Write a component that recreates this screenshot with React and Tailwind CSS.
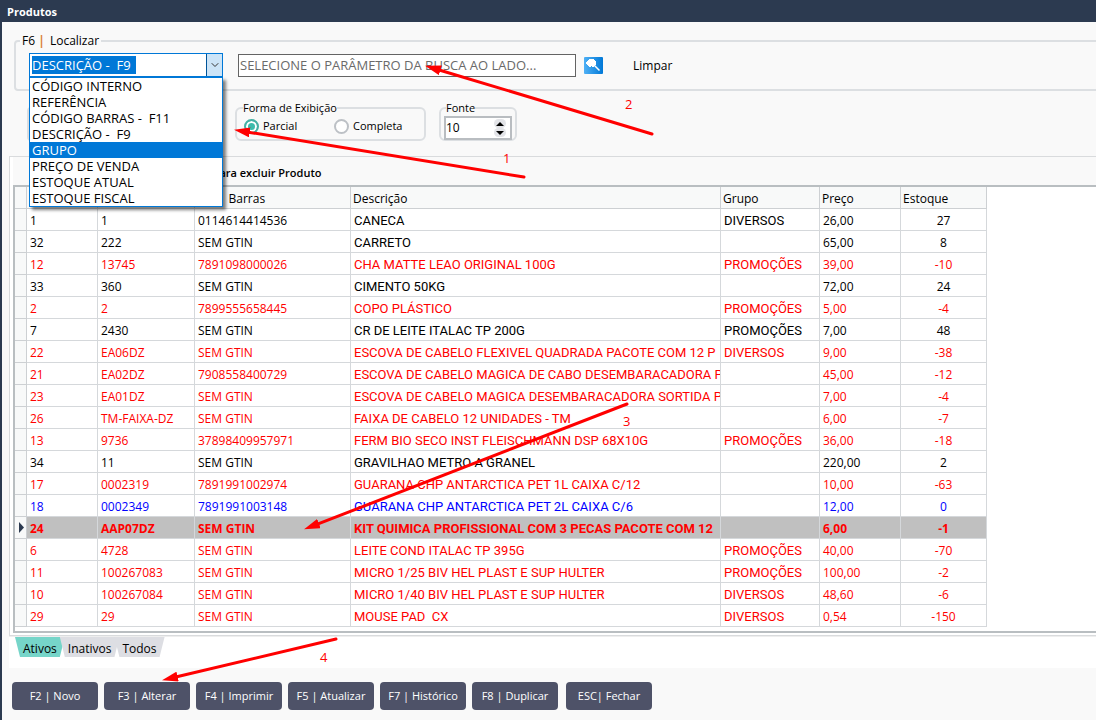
import { useState } from 'react';
import { ChevronDown } from 'lucide-react';

const searchFields = [
  'CÓDIGO INTERNO',
  'REFERÊNCIA',
  'CÓDIGO BARRAS -\u00a0 F11',
  'DESCRIÇÃO -\u00a0 F9',
  'GRUPO',
  'PREÇO DE VENDA',
  'ESTOQUE ATUAL',
  'ESTOQUE FISCAL',
];

// codigo, referencia, barras, descricao, grupo, preco, estoque
const products = [
  ['1', '1', '0114614414536', 'CANECA', 'DIVERSOS', '26,00', '27'],
  ['32', '222', 'SEM GTIN', 'CARRETO', '', '65,00', '8'],
  ['12', '13745', '7891098000026', 'CHA MATTE LEAO ORIGINAL 100G', 'PROMOÇÕES', '39,00', '-10'],
  ['33', '360', 'SEM GTIN', 'CIMENTO 50KG', '', '72,00', '24'],
  ['2', '2', '7899555658445', 'COPO PLÁSTICO', 'PROMOÇÕES', '5,00', '-4'],
  ['7', '2430', 'SEM GTIN', 'CR DE LEITE ITALAC TP 200G', 'PROMOÇÕES', '7,00', '48'],
  ['22', 'EA06DZ', 'SEM GTIN', 'ESCOVA DE CABELO FLEXIVEL QUADRADA PACOTE COM 12 P', 'DIVERSOS', '9,00', '-38'],
  ['21', 'EA02DZ', '7908558400729', 'ESCOVA DE CABELO MAGICA DE CABO DESEMBARACADORA P', '', '45,00', '-12'],
  ['23', 'EA01DZ', 'SEM GTIN', 'ESCOVA DE CABELO MAGICA DESEMBARACADORA SORTIDA PA', '', '7,00', '-4'],
  ['26', 'TM-FAIXA-DZ', 'SEM GTIN', 'FAIXA DE CABELO 12 UNIDADES - TM', '', '6,00', '-7'],
  ['13', '9736', '37898409957971', 'FERM BIO SECO INST FLEISCHMANN DSP 68X10G', 'PROMOÇÕES', '36,00', '-18'],
  ['34', '11', 'SEM GTIN', 'GRAVILHAO METRO A GRANEL', '', '220,00', '2'],
  ['17', '0002319', '7891991002974', 'GUARANA CHP ANTARCTICA PET 1L CAIXA C/12', '', '10,00', '-63'],
  ['18', '0002349', '7891991003148', 'GUARANA CHP ANTARCTICA PET 2L CAIXA C/6', '', '12,00', '0'],
  ['24', 'AAP07DZ', 'SEM GTIN', 'KIT QUIMICA PROFISSIONAL COM 3 PECAS PACOTE COM 12', '', '6,00', '-1'],
  ['6', '4728', 'SEM GTIN', 'LEITE COND ITALAC TP 395G', 'PROMOÇÕES', '40,00', '-70'],
  ['11', '100267083', 'SEM GTIN', 'MICRO 1/25 BIV HEL PLAST E SUP HULTER', 'PROMOÇÕES', '100,00', '-2'],
  ['10', '100267084', 'SEM GTIN', 'MICRO 1/40 BIV HEL PLAST E SUP HULTER', 'DIVERSOS', '48,60', '-6'],
  ['29', '29', 'SEM GTIN', 'MOUSE PAD\u00a0 CX', 'DIVERSOS', '0,54', '-150'],
];

const columns = ['', '', 'Cód.\u00a0 Barras', 'Descrição', 'Grupo', 'Preço', 'Estoque'];

const actions = [
  'F2 | Novo',
  'F3 | Alterar',
  'F4 | Imprimir',
  'F5 | Atualizar',
  'F7 | Histórico',
  'F8 | Duplicar',
  'ESC| Fechar',
];

const arrows = [
  { label: '1', from: [524, 177], to: [235, 130], text: [503, 163] },
  { label: '2', from: [652, 134], to: [426, 66], text: [625, 109] },
  { label: '3', from: [627, 404], to: [305, 529], text: [623, 426] },
  { label: '4', from: [336, 639], to: [163, 680], text: [320, 662] },
];

// negative stock is red, zero is blue
function stockColor(stock) {
  const n = Number(stock);
  if (n < 0) return 'text-[#ff0000]';
  if (n === 0) return 'text-[#0000ff]';
  return 'text-black';
}

function FieldSelect() {
  const [field, setField] = useState(searchFields[3]);
  const [open, setOpen] = useState(true);
  const [active, setActive] = useState(4);

  return (
    <div className="relative w-[194px]">
      <div className="flex h-6 border border-[#0078d7] bg-white">
        <div className="flex flex-1 items-center pl-0.5">
          <select
            aria-label="Localizar por"
            value={field}
            onChange={(e) => setField(e.target.value)}
            className="h-[18px] w-[104px] appearance-none bg-[#0078d7] text-[13px] leading-[18px] text-white outline-none"
          >
            {searchFields.map((f) => (
              <option key={f}>{f}</option>
            ))}
          </select>
        </div>
        <button
          aria-label="Abrir lista"
          onClick={() => setOpen(!open)}
          className="flex w-4 items-center justify-center border-l border-[#005499] bg-[#cce4f7]"
        >
          <ChevronDown className="h-3 w-3 text-[#333]" strokeWidth={2} />
        </button>
      </div>
      {open && (
        <ul
          role="listbox"
          aria-label="Campos de busca"
          className="absolute top-full left-0 z-10 w-full border border-[#0078d7] bg-white shadow-[3px_3px_3px_rgba(0,0,0,0.5)]"
        >
          {searchFields.map((f, i) => (
            <li
              key={f}
              role="option"
              aria-selected={i === active}
              onMouseEnter={() => setActive(i)}
              onClick={() => {
                setField(f);
                setOpen(false);
              }}
              className={`h-4 pl-0.5 text-[13px] leading-4 whitespace-nowrap ${
                i === active ? 'bg-[#0078d7] text-white' : 'text-black'
              }`}
            >
              {f}
            </li>
          ))}
        </ul>
      )}
    </div>
  );
}

function ViewOption({ label, checked, onChange }) {
  return (
    <label className="flex w-[90px] items-center gap-1">
      <input
        type="radio"
        name="exibicao"
        checked={checked}
        onChange={onChange}
        className="h-[15px] w-[15px] appearance-none rounded-full border-2 border-[#bdc1c6] bg-white checked:border-[#45b0a4] checked:bg-[#3dbbac] checked:shadow-[inset_0_0_0_2px_white]"
      />
      {label}
    </label>
  );
}

function SearchIcon() {
  return (
    <svg width="19" height="17" viewBox="0 0 19 17" aria-hidden="true">
      <defs>
        <linearGradient id="search-bg">
          <stop offset="0" stopColor="#4fb0f5" />
          <stop offset="1" stopColor="#0078d7" />
        </linearGradient>
      </defs>
      <rect width="19" height="17" rx="1" fill="url(#search-bg)" />
      <path d="M4 3h1V2h5v1h1v1h1v4h-1v1h-1v1H8V9H7v1H5V9H4V8H3V7H2V5h1V4h1z" fill="#fff" />
      <path d="M10.500 8.500l5 5" stroke="#fff" strokeWidth="1.500" />
    </svg>
  );
}

function ProductTable() {
  const [selected, setSelected] = useState('24');

  return (
    <table className="w-[972px] table-fixed border-separate border-spacing-0 text-left">
      <colgroup>
        <col className="w-3" />
        <col className="w-[71px]" />
        <col className="w-[97px]" />
        <col className="w-[156px]" />
        <col className="w-[370px]" />
        <col className="w-[99px]" />
        <col className="w-[81px]" />
        <col className="w-[86px]" />
      </colgroup>
      <thead>
        <tr className="h-[22px] bg-[#f8f9f9]">
          <th className="border-r border-b border-[#cdd0d3] p-0" />
          {columns.map((c, i) => (
            <th key={i} className="border-r border-b border-[#cdd0d3] p-0 pt-[3px] pl-0.5 font-normal whitespace-nowrap">
              {c}
            </th>
          ))}
        </tr>
      </thead>
      <tbody>
        {products.map((row) => {
          const isSelected = row[0] === selected;
          return (
            <tr
              key={row[0]}
              onClick={() => setSelected(row[0])}
              className={`h-[22px] ${stockColor(row[6])} ${isSelected ? 'bg-[#c0c0c0] font-bold' : ''}`}
            >
              <td className="border-r border-b border-[#cdd0d3] bg-[#f8f9f9] p-0">
                {isSelected && (
                  <svg width="6" height="11" viewBox="0 0 6 11" className="ml-1" aria-hidden="true">
                    <path d="M0 0l5 5.500l-5 5.500z" fill="#2c3a50" />
                  </svg>
                )}
              </td>
              {row.map((cell, i) => (
                <td
                  key={i}
                  className={`overflow-hidden border-r border-b border-[#d5d8db] p-0 pt-[3px] whitespace-nowrap ${
                    i === 6 ? 'text-center' : 'pl-[3px]'
                  } ${i === 3 || i === 4 ? "font-['Roboto',sans-serif] text-[13px]" : ''}`}
                >
                  {cell}
                </td>
              ))}
            </tr>
          );
        })}
      </tbody>
    </table>
  );
}

function Annotations() {
  return (
    <svg className="pointer-events-none absolute top-0 -left-0.5 z-20" width="700" height="720" aria-hidden="true">
      <defs>
        <marker id="head" markerUnits="userSpaceOnUse" markerWidth="16" markerHeight="10" refX="15" refY="5" orient="auto">
          <path d="M0 0L16 5L0 10z" fill="#ff0000" />
        </marker>
      </defs>
      {arrows.map(({ label, from, to, text }) => {
        // stop the shaft inside the head so the tip stays sharp
        const len = Math.hypot(to[0] - from[0], to[1] - from[1]);
        const ux = (to[0] - from[0]) / len;
        const uy = (to[1] - from[1]) / len;
        return (
          <g key={label}>
            <line x1={from[0]} y1={from[1]} x2={to[0] - ux * 12} y2={to[1] - uy * 12} stroke="#ff0000" strokeWidth="3" strokeLinecap="round" />
            <line x1={to[0] - ux * 12} y1={to[1] - uy * 12} x2={to[0]} y2={to[1]} stroke="none" markerEnd="url(#head)" />
            <text x={text[0]} y={text[1]} fill="#ff0000" fontSize="13">
              {label}
            </text>
          </g>
        );
      })}
    </svg>
  );
}

export default function App() {
  const [view, setView] = useState('Parcial');
  const [fontSize, setFontSize] = useState(10);
  const [tab, setTab] = useState('Ativos');

  return (
    <div className="relative min-h-screen overflow-hidden border-l-2 border-[#2c3a50] bg-[#f9f9f9] font-['Open_Sans','Noto_Sans',sans-serif] text-[12px] leading-4 text-black">
      <header className="flex h-[22px] items-center bg-[#2c3a50] pt-px pl-[5px]">
        <h1 className="text-[11px] font-bold text-white">Produtos</h1>
      </header>

      <fieldset className="mt-[11px] -mr-1 ml-3 h-[58px] rounded border-2 border-[#dcdfe2]">
        <legend className="ml-1 px-0.5">
          F6 <span className="mr-0.5 font-bold text-[#d98032]">|</span> Localizar
        </legend>
        <div className="ml-[13px] flex items-center pt-1">
          <FieldSelect />
          <input
            type="text"
            aria-label="Busca"
            placeholder="SELECIONE O PARÂMETRO DA BUSCA AO LADO..."
            className="ml-[15px] h-[23px] w-[338px] border border-[#646464] bg-white pl-px text-[13px] outline-none placeholder:text-[#6a6a6a]"
          />
          <button aria-label="Buscar" className="ml-2">
            <SearchIcon />
          </button>
          <button className="ml-[30px] pt-0.5">Limpar</button>
        </div>
      </fieldset>

      <div className="mt-[9px] ml-[25px] flex items-start text-[11px]">
        <div className="mt-[7px] h-[34px] w-[195px] rounded border-2 border-[#dcdfe2]" />
        <fieldset className="ml-[13px] h-[41px] w-[190px] rounded-md border-2 border-[#dcdfe2]">
          <legend className="ml-1.5">Forma de Exibição</legend>
          <div className="flex pt-0.5 pl-[7px]">
            <ViewOption label="Parcial" checked={view === 'Parcial'} onChange={() => setView('Parcial')} />
            <ViewOption label="Completa" checked={view === 'Completa'} onChange={() => setView('Completa')} />
          </div>
        </fieldset>
        <fieldset className="ml-[13px] h-[41px] w-[78px] rounded-md border-2 border-[#dcdfe2] px-[3px]">
          <legend className="ml-0.5">Fonte</legend>
          <div className="flex h-6 items-center border-2 border-[#b9bdc1] bg-white">
            <input
              type="text"
              aria-label="Fonte"
              value={fontSize}
              onChange={(e) => setFontSize(Number(e.target.value) || 0)}
              className="w-0 flex-1 text-[12px] outline-none"
            />
            <div className="mr-1 flex flex-col">
              <button
                aria-label="Aumentar fonte"
                onClick={() => setFontSize(fontSize + 1)}
                className="flex h-[9px] w-3 items-center justify-center rounded-full bg-[#e3e4e8]"
              >
                <svg width="8" height="4" viewBox="0 0 8 4">
                  <path d="M0 4l4-4l4 4z" />
                </svg>
              </button>
              <button
                aria-label="Diminuir fonte"
                onClick={() => setFontSize(fontSize - 1)}
                className="flex h-[9px] w-3 items-center justify-center rounded-full bg-[#e3e4e8]"
              >
                <svg width="8" height="4" viewBox="0 0 8 4">
                  <path d="M0 0l4 4l4-4z" />
                </svg>
              </button>
            </div>
          </div>
        </fieldset>
      </div>

      <main className="mt-[15px] ml-[7px] bg-white">
        <section className="border-t border-b border-l border-[#d9dbdd] pb-0.5 pl-[3px] shadow-[0_1px_0_#eeeeee]">
          <p className="flex h-7 items-center bg-[#f9f9f9] pt-1 pl-[158px] text-[11px] font-semibold">DELETE para excluir Produto</p>
          <div className="border-2 border-r-0 border-[#b9bec1] bg-white pb-1">
            <ProductTable />
          </div>
        </section>
        <div role="tablist" className="flex h-8 items-start pt-px pl-1.5">
          {['Ativos', 'Inativos', 'Todos'].map((t) => (
            <button
              key={t}
              role="tab"
              aria-selected={tab === t}
              onClick={() => setTab(t)}
              className={`-mr-[5px] h-5 px-2 pt-1 leading-4 [clip-path:polygon(0_0,100%_0,calc(100%-5px)_100%,5px_100%)] ${
                tab === t ? 'bg-[#76d5c9]' : 'bg-[#dddee3]'
              }`}
            >
              {t}
            </button>
          ))}
        </div>
      </main>

      <footer className="mt-3.5 mb-2.5 ml-2.5 flex gap-1.5">
        {actions.map((a) => (
          <button key={a} className="h-7 w-[86px] rounded bg-[#4e5268] text-[11px] whitespace-nowrap text-white last:ml-0.5">
            {a}
          </button>
        ))}
      </footer>

      <Annotations />
    </div>
  );
}
